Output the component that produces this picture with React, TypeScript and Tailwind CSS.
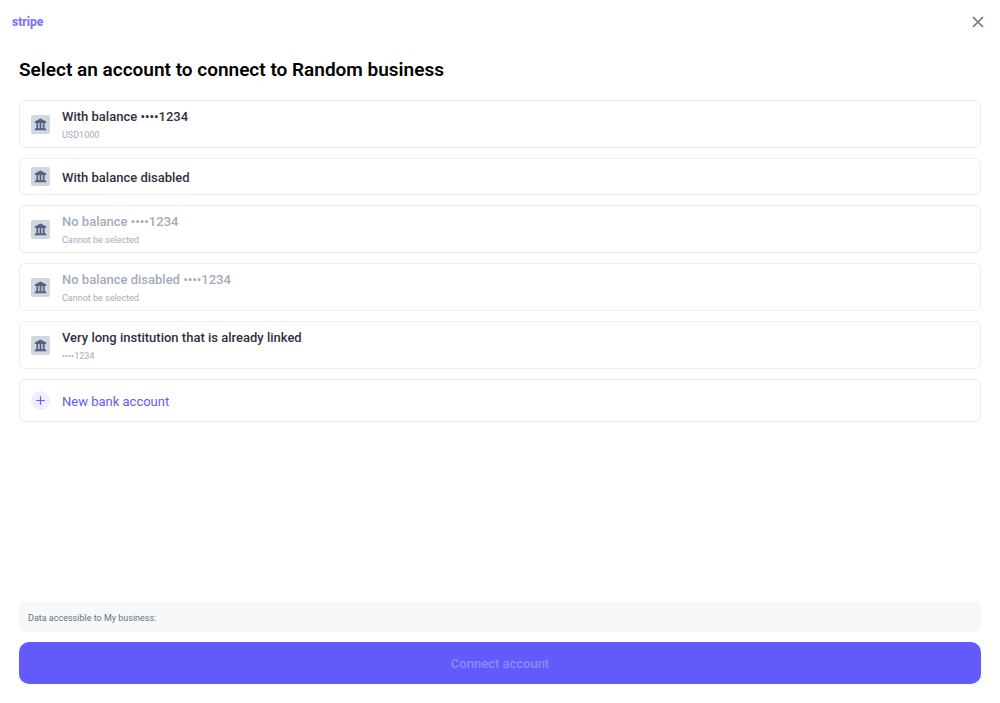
type Account = {
  name: string;
  detail?: string;
  disabled?: boolean;
};

const accounts: Account[] = [
  { name: "With balance ••••1234", detail: "USD1000" },
  { name: "With balance disabled" },
  { name: "No balance ••••1234", detail: "Cannot be selected", disabled: true },
  { name: "No balance disabled ••••1234", detail: "Cannot be selected", disabled: true },
  { name: "Very long institution that is already linked", detail: "••••1234" },
];

function BankIcon() {
  return (
    <span className="flex size-[19px] shrink-0 items-center justify-center rounded-xs bg-[#cfd7df]">
      <svg viewBox="0 0 13 13" className="size-[13px] fill-[#556182]" aria-hidden="true">
        <path d="M6.5 .6 12.2 3.4V4.9H.8V3.4ZM2.4 4.9H4.2V10.5H2.4ZM5.6 4.9H7.4V10.5H5.6ZM8.8 4.9H10.6V10.5H8.8ZM1.4 10.2H11.6L12.6 12.2H.4Z" />
      </svg>
    </span>
  );
}

function AccountRow({ name, detail, disabled }: Account) {
  return (
    <li>
      <button
        type="button"
        disabled={disabled}
        className={`flex w-full items-center gap-3 rounded-md border border-[#ebeef1] px-[11px] text-left ${detail ? "h-12" : "h-[37px]"}`}
      >
        <BankIcon />
        <span className="flex flex-col gap-[3px] pt-[2px]">
          <span className={`text-[13px] leading-4 font-medium ${disabled ? "text-[#a3acba]" : "text-[#30313d]"}`}>
            {name}
          </span>
          {detail && <span className="text-[9px] leading-[14px] text-[#a3acba]">{detail}</span>}
        </span>
      </button>
    </li>
  );
}

export default function App() {
  return (
    <div className="flex min-h-screen flex-col bg-white font-['Roboto',sans-serif]">
      <header className="flex h-[43px] items-center justify-between pr-4 pl-3">
        <span className="text-xs leading-4 font-extrabold text-[#7a73ff]">stripe</span>
        <button type="button" aria-label="Close" className="flex size-3 items-center justify-center">
          <svg viewBox="0 0 12 12" className="size-3 fill-none stroke-[#6a7383]" strokeWidth="1.6" aria-hidden="true">
            <path d="M1 1 11 11M11 1 1 11" />
          </svg>
        </button>
      </header>

      <main className="flex flex-1 flex-col px-[19px] pt-[15px] pb-[19px]">
        <h1 className="text-[19px] leading-6 font-semibold text-black">
          Select an account to connect to Random business
        </h1>

        <ul className="mt-[18px] flex flex-col gap-[10px]">
          {accounts.map((account) => (
            <AccountRow key={account.name} {...account} />
          ))}
          <li>
            <button
              type="button"
              className="flex h-[43px] w-full items-center gap-3 rounded-md border border-[#ebeef1] px-[11px] text-left"
            >
              <span className="flex size-[19px] shrink-0 items-center justify-center rounded-full bg-[#efeeff]">
                <svg viewBox="0 0 9 9" className="size-[9px] fill-none stroke-[#625afa]" strokeWidth="1.2" aria-hidden="true">
                  <path d="M4.5 .2V8.8M.2 4.5H8.8" />
                </svg>
              </span>
              <span className="pt-[2px] text-[13px] leading-4 text-[#625afa]">New bank account</span>
            </button>
          </li>
        </ul>

        <footer className="mt-auto flex flex-col gap-[10px] pt-6">
          <p className="rounded-md bg-[#f6f8fa] px-[9px] pt-[9px] pb-[6px] text-[9px] leading-4 text-[#6a7383]">
            Data accessible to My business:
          </p>
          <button
            type="button"
            disabled
            className="h-[42px] rounded-[10px] bg-[#625afa] pt-[2px] text-[13px] leading-4 font-medium text-white/30"
          >
            Connect account
          </button>
        </footer>
      </main>
    </div>
  );
}
